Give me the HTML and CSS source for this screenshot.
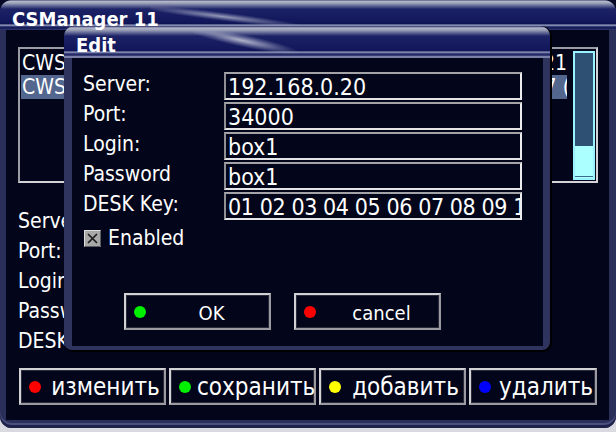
FILE: index.html
```html
<!DOCTYPE html>
<html>
<head>
<meta charset="utf-8">
<title>CSManager 11</title>
<link rel="stylesheet" href="styles.css">
</head>
<body>
<div class="win">
  <div class="win-title"><span class="title-text">CSManager 11</span></div>
  <div class="win-body">
    <div class="listbox">
      <div class="rows">
        <div class="row"><span class="cell-l">CWS</span><span class="cell-r">21</span></div>
        <div class="row sel"><span class="cell-l">CWS</span><span class="cell-r cut">7 (</span></div>
      </div>
      <div class="scrollbar"></div>
    </div>
    <div class="info">
      <div class="info-row">Server:</div>
      <div class="info-row">Port:</div>
      <div class="info-row">Login:</div>
      <div class="info-row">Password</div>
      <div class="info-row">DESK Key:</div>
    </div>
    <div class="keys">
      <div class="key"><span class="dot red"></span><span class="key-text">изменить</span></div>
      <div class="key"><span class="dot green"></span><span class="key-text">сохранить</span></div>
      <div class="key"><span class="dot yellow"></span><span class="key-text">добавить</span></div>
      <div class="key key-last"><span class="dot blue"></span><span class="key-text">удалить</span></div>
    </div>
  </div>

  <div class="dialog">
    <div class="dlg-title"><span class="dlg-title-text">Edit</span></div>
    <div class="dlg-body">
      <div class="form">
        <div class="flabel">Server:</div><div class="field">192.168.0.20</div>
        <div class="flabel">Port:</div><div class="field">34000</div>
        <div class="flabel">Login:</div><div class="field">box1</div>
        <div class="flabel">Password</div><div class="field">box1</div>
        <div class="flabel">DESK Key:</div><div class="field key-field">01 02 03 04 05 06 07 08 09 10 11 12 13 14</div>
      </div>
      <div class="check-row">
        <svg class="checkbox" width="17" height="17" viewBox="0 0 17 17">
          <rect x="0.5" y="0.5" width="16" height="16" fill="#a8a8a8" stroke="#dcdcdc"/>
          <path d="M16.5 0.5V16.5H0.5" fill="none" stroke="#5c5c5c"/>
          <path d="M4 4L13 13M13 4L4 13" stroke="#1c1c1c" stroke-width="1.7"/>
        </svg>
        <span class="check-label">Enabled</span>
      </div>
      <div class="dlg-buttons">
        <div class="btn"><span class="dot green"></span><span class="btn-text">OK</span></div>
        <div class="btn"><span class="dot red"></span><span class="btn-text">cancel</span></div>
      </div>
    </div>
  </div>
</div>
</body>
</html>
```
FILE: styles.css
```css
html, body {
  margin: 0;
  padding: 0;
  width: 616px;
  height: 432px;
  overflow: hidden;
}

body {
  background: linear-gradient(180deg, #070a26 0, #070a26 418px, #d8d9e1 418px);
  font-family: "DejaVu Sans Condensed", "DejaVu Sans", sans-serif;
  font-stretch: condensed;
  color: #ffffff;
}

.win {
  position: relative;
  width: 616px;
  height: 428px;
  background: #2a2f5a;
  border-radius: 12px;
  display: flex;
  flex-direction: column;
  box-shadow: inset 0 -3px 0 #1e2248, inset 0 -5px 0 #4a5080;
}

.win-title {
  position: relative;
  box-sizing: border-box;
  height: 30px;
  padding: 8px 0 0 12px;
  border-radius: 12px 12px 0 0;
  overflow: hidden;
  background: linear-gradient(180deg,
    #30366a 0, #b6bacc 1px, #a0a5bc 3px, #5c6292 6px, #1c2266 9px,
    #11175a 22px, #0d1352 24px, #acb2ce 25px, #5a6290 26px,
    #161c5a 27px, #1d235e 29px, #3a4278 30px);
}

.win-title::after {
  content: "";
  position: absolute;
  left: 150px;
  top: 13px;
  width: 160px;
  height: 9px;
  background: radial-gradient(ellipse at 45% 50%, rgba(200, 204, 220, 0.7) 0, rgba(150, 156, 190, 0.3) 45%, rgba(0, 0, 0, 0) 70%);
  transform: rotate(7deg);
}

.title-text {
  position: relative;
  z-index: 1;
  display: block;
  font-weight: bold;
  font-size: 20px;
  line-height: 23px;
  white-space: nowrap;
}

.win-body {
  flex: 1;
  margin: 0 7px 8px 6px;
  background: #03061a;
  padding: 17px 0 0 12px;
  display: flex;
  flex-direction: column;
}

.listbox {
  box-sizing: border-box;
  width: 580px;
  height: 136px;
  border: 2px solid;
  border-color: #9c9ca4 #d4d4d8 #d4d4d8 #9c9ca4;
  display: flex;
  padding: 2px 1px 0 1px;
}

.rows {
  width: 546px;
  display: flex;
  flex-direction: column;
}

.row {
  display: flex;
  justify-content: space-between;
  height: 24px;
  line-height: 24px;
  font-size: 21px;
  white-space: nowrap;
  overflow: hidden;
  padding-left: 1px;
}

.row.sel {
  background: #53668e;
}

.cell-r.cut {
  margin-right: -3px;
}

.scrollbar {
  box-sizing: border-box;
  width: 22px;
  height: 129px;
  margin-left: 6px;
  border: 2px solid #98f2ff;
  background: linear-gradient(180deg,
    #2d5073 0, #2d5073 93px, #acffff 93px,
    #acffff 123px, #3a6c8c 123px, #3a6c8c 124px, #acffff 124px);
}

.info {
  margin-top: 23px;
  display: flex;
  flex-direction: column;
}

.info-row {
  height: 30px;
  line-height: 30px;
  font-size: 21px;
  white-space: nowrap;
}

.keys {
  display: flex;
  gap: 3px;
  margin: 12px 0 0 1px;
}

.key, .btn {
  box-sizing: border-box;
  height: 37px;
  border: 2px solid;
  border-color: #d2d2d4 #9a9aa0 #9a9aa0 #d2d2d4;
  box-shadow: inset 0 0 0 1px #2a2c3c;
  display: flex;
  align-items: center;
  background: #03061a;
}

.key {
  width: 147px;
}

.key.key-last {
  width: 128px;
}

.dot {
  flex: none;
  width: 12px;
  height: 12px;
  border-radius: 50%;
  margin-left: 8px;
}

.red { background: #ff0000; }
.green { background: #00f000; }
.yellow { background: #ffff00; }
.blue { background: #0000ff; }

.key-text {
  flex: 1;
  margin-left: 6px;
  text-align: center;
  font-size: 24px;
  white-space: nowrap;
}

.dialog {
  position: absolute;
  left: 64px;
  top: 26px;
  width: 486px;
  height: 324px;
  background: #2f345f;
  border-radius: 10px 10px 8px 8px;
  box-shadow: 1px 1px 0 1px #000000;
  display: flex;
  flex-direction: column;
}

.dlg-title {
  position: relative;
  box-sizing: border-box;
  height: 32px;
  padding: 8px 0 0 12px;
  border-radius: 10px 10px 0 0;
  overflow: hidden;
  background: linear-gradient(180deg,
    #2a3066 0, #b2b6ca 2px, #9ca1b8 4px, #5c6292 7px, #1c2266 10px,
    #11175a 24px, #0d1352 25px, #acb2ce 26px, #4a5288 27px,
    #161c5a 29px, #9ca2c2 31px, #5a6290 32px);
}

.dlg-title::after {
  content: "";
  position: absolute;
  left: 128px;
  top: 9px;
  width: 110px;
  height: 13px;
  background: radial-gradient(ellipse at 45% 50%, rgba(214, 216, 228, 0.8) 0, rgba(160, 166, 196, 0.35) 45%, rgba(0, 0, 0, 0) 70%);
  transform: rotate(12deg);
}

.dlg-title-text {
  position: relative;
  z-index: 1;
  display: block;
  font-weight: bold;
  font-size: 20px;
  line-height: 23px;
}

.dlg-body {
  flex: 1;
  margin: 0 7px 4px 8px;
  background: #03061a;
  padding: 14px 0 0 11px;
}

.form {
  display: grid;
  grid-template-columns: 141px 298px;
  grid-auto-rows: 28px;
  row-gap: 2px;
}

.flabel {
  font-size: 21px;
  line-height: 25px;
  white-space: nowrap;
}

.field {
  box-sizing: border-box;
  height: 28px;
  border: 2px solid;
  border-color: #a4a4a8 #ececee #e4e4e6 #909094;
  padding: 3px 0 0 2px;
  font-size: 23px;
  line-height: 21px;
  white-space: nowrap;
  overflow: hidden;
}

.key-field {
  letter-spacing: -0.4px;
}

.check-row {
  display: flex;
  align-items: flex-start;
  margin: 10px 0 0 1px;
  height: 17px;
}

.checkbox {
  flex: none;
  display: block;
}

.check-label {
  margin-left: 7px;
  font-size: 21px;
  line-height: 17px;
}

.dlg-buttons {
  display: flex;
  gap: 23px;
  margin: 46px 0 0 41px;
}

.btn {
  width: 147px;
}

.btn-text {
  flex: 1;
  margin-left: 8px;
  padding-top: 2px;
  text-align: center;
  font-size: 20px;
}
```
